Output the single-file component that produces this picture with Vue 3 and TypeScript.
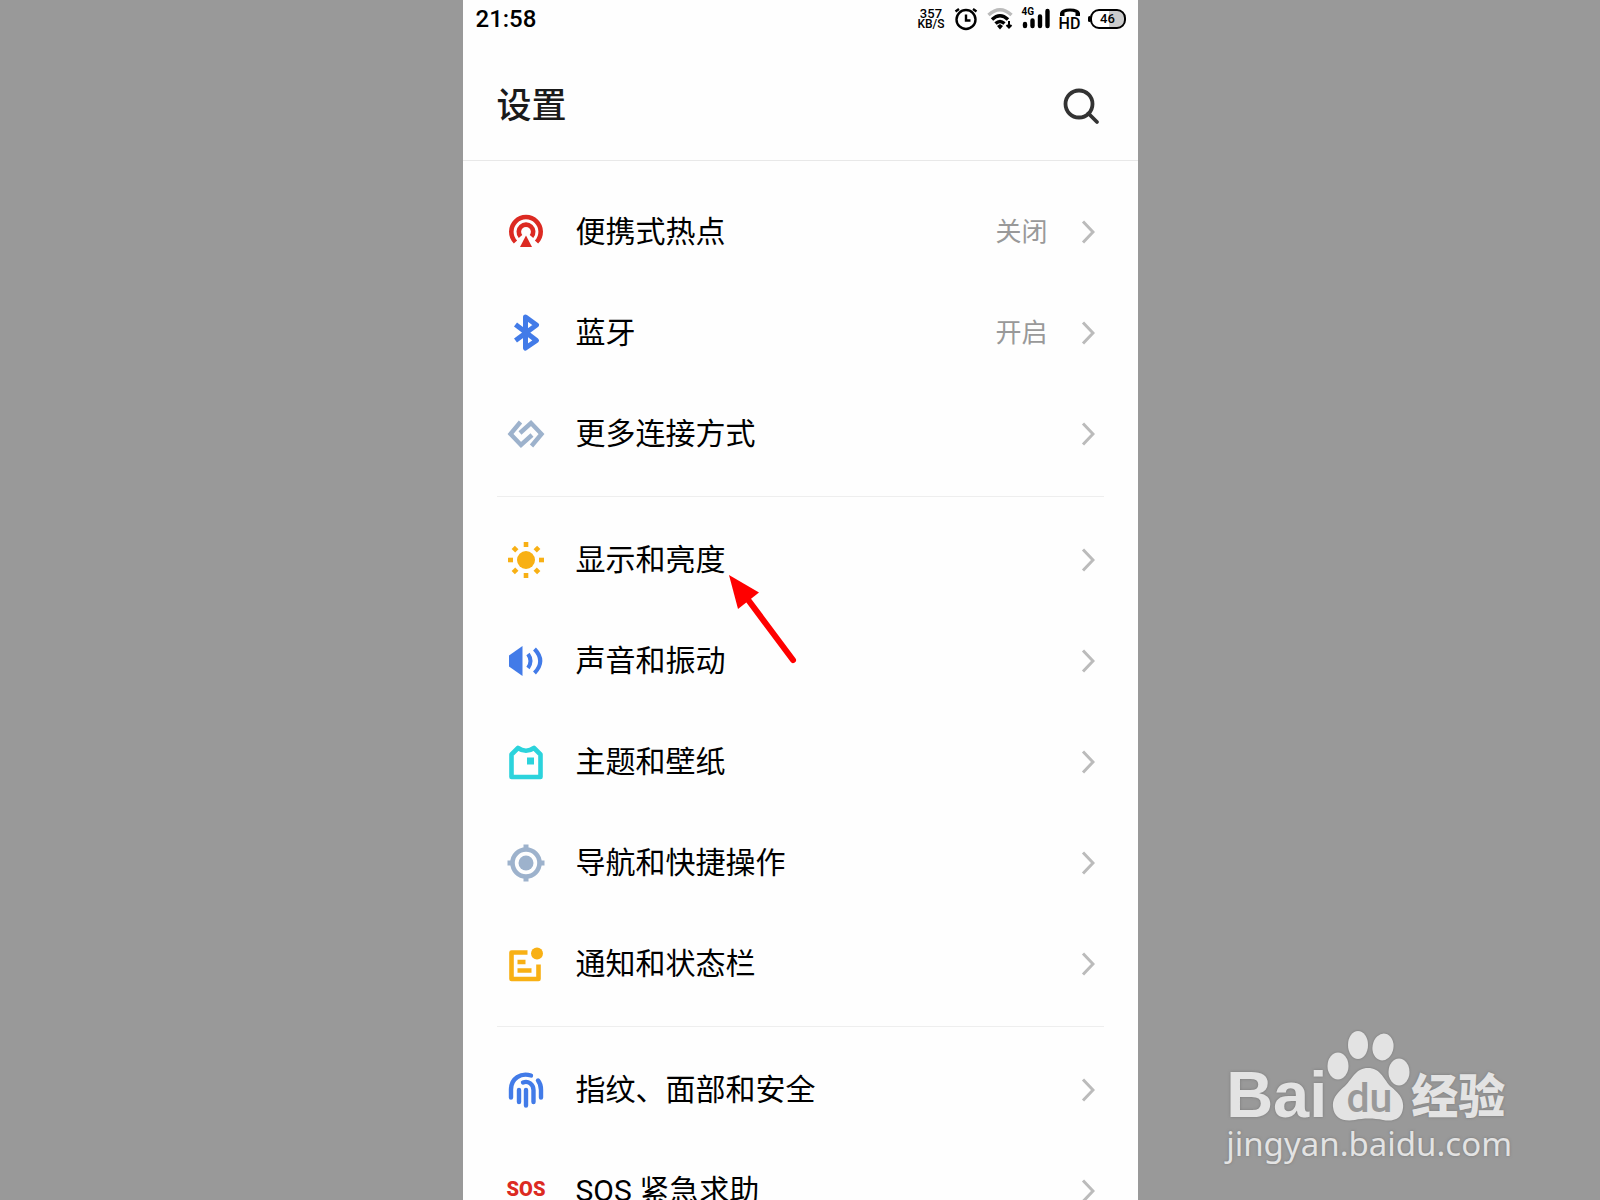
<script setup lang="ts">
type IconName =
  | 'hotspot' | 'bluetooth' | 'link' | 'sun' | 'sound'
  | 'theme' | 'target' | 'notice' | 'finger' | 'sos'

interface Item {
  icon: IconName
  label: string
  value?: string
  marked?: boolean
}

const groups: Item[][] = [
  [
    { icon: 'hotspot', label: '便携式热点', value: '关闭' },
    { icon: 'bluetooth', label: '蓝牙', value: '开启' },
    { icon: 'link', label: '更多连接方式' },
  ],
  [
    { icon: 'sun', label: '显示和亮度', marked: true },
    { icon: 'sound', label: '声音和振动' },
    { icon: 'theme', label: '主题和壁纸' },
    { icon: 'target', label: '导航和快捷操作' },
    { icon: 'notice', label: '通知和状态栏' },
  ],
  [
    { icon: 'finger', label: '指纹、面部和安全' },
    { icon: 'sos', label: 'SOS 紧急求助' },
  ],
]

const rays = [0, 45, 90, 135, 180, 225, 270, 315]
</script>

<template>
  <div class="page">
    <main class="phone">
      <div class="status">
        <time class="clock">21:58</time>
        <div class="indicators">
          <span class="speed"><span>357</span><span>KB/S</span></span>
          <svg width="24" height="24" viewBox="0 0 24 24" fill="none" stroke="#000" stroke-width="2.4">
            <circle cx="12" cy="12.5" r="9.5" />
            <path d="M12 7.5V13.5H16.5M1.5 4.5 5 2M22.5 4.5 19 2" />
          </svg>
          <svg width="26" height="24" viewBox="0 0 26 24" fill="none" stroke="#000" stroke-width="3.4">
            <path d="M1.5 8Q13 -2.5 24.5 8" stroke="#bbb" />
            <path d="M5 12.5Q13 5 21 12.5" />
            <path d="M8.5 16.5Q13 12.5 17.5 16.5" />
            <path d="M10 19 13 17 16 19 13 22.5Z" fill="#000" stroke="none" />
            <path d="M22 14V20M19.5 18 22 20.5 24.5 18" stroke-width="2" />
          </svg>
          <span class="signal">
            <small>4G</small>
            <svg width="28" height="22" viewBox="0 0 28 22" stroke="#000" stroke-width="4.4" stroke-linecap="round">
              <path d="M3 16V18M10.5 12.5V18M18 8.5V18M25.5 3V18" />
            </svg>
          </span>
          <span class="hd">
            <svg width="22" height="9" viewBox="0 0 22 9">
              <path d="M1 8V5Q2 .5 11 .5T21 5V8H16.5V4.5Q11 2.5 5.500 4.5V8Z" />
            </svg>
            <b>HD</b>
          </span>
          <span class="battery">46</span>
        </div>
      </div>

      <header class="head">
        <h1>设置</h1>
        <button class="search" type="button" aria-label="搜索">
          <svg width="40" height="40" viewBox="0 0 40 40" fill="none" stroke="#333" stroke-width="3.8">
            <circle cx="18" cy="17" r="13.5" />
            <path d="M27.5 26.5 36 35" stroke-linecap="round" />
          </svg>
        </button>
      </header>

      <nav class="list">
        <ul v-for="(group, g) in groups" :key="g" class="group">
          <li v-for="item in group" :key="item.icon">
            <a class="row" href="#">
              <svg class="icon" :class="item.icon" viewBox="0 0 40 40" fill="none" stroke="currentColor" stroke-width="4.6">
                <g v-if="item.icon === 'hotspot'">
                  <path d="M9.5 30A14.7 14.7 0 1 1 30.5 30" />
                  <path d="M14.5 24.5A7.2 7.2 0 1 1 25.5 24.5" />
                  <path d="M20 23.5 26 35H14Z" fill="currentColor" stroke="none" />
                </g>
                <path
                  v-else-if="item.icon === 'bluetooth'"
                  d="M9.5 11.5 30.5 27.5 19.5 35V4L30.5 12 9.5 27.5"
                  stroke-width="5"
                  stroke-linejoin="round"
                />
                <path
                  v-else-if="item.icon === 'link'"
                  d="M14.5 8 4.5 20 15 31 26 21M25.5 32 35.5 20 25 9 14 19"
                  stroke-width="4.4"
                />
                <g v-else-if="item.icon === 'sun'">
                  <circle cx="20" cy="20" r="9" fill="currentColor" stroke="none" />
                  <path v-for="r in rays" :key="r" d="M20 2V7" :transform="`rotate(${r} 20 20)`" />
                </g>
                <g v-else-if="item.icon === 'sound'">
                  <path d="M3 14.5 16.5 5V35L3 25.5Z" fill="currentColor" stroke="none" />
                  <path d="M22 13Q27 20 22 27M28.5 8Q40 20 28.5 32" stroke-width="4" />
                </g>
                <g v-else-if="item.icon === 'theme'">
                  <path d="M5.5 12.5 12 6Q20 11.5 28 6L34.5 12.5V35H5.5Z" stroke-linejoin="round" />
                  <path d="M21 15.5H28V22.5H21Z" fill="currentColor" stroke="none" />
                </g>
                <g v-else-if="item.icon === 'target'">
                  <circle cx="20" cy="20" r="13.5" />
                  <circle cx="20" cy="20" r="7.5" fill="currentColor" stroke="none" />
                  <path d="M20 1.5V6M20 34V38.5M1.5 20H6M34 20H38.5" stroke-width="5" />
                </g>
                <g v-else-if="item.icon === 'notice'">
                  <path d="M21.5 8.5H5.5V35H32.5V20.500" stroke-linejoin="round" />
                  <path d="M11.5 18H19.5M11.5 26.5H25.5" />
                  <circle cx="31" cy="9.5" r="6" fill="currentColor" stroke="none" />
                </g>
                <path
                  v-else-if="item.icon === 'finger'"
                  d="M5 27.5V19.5C5 8 15 2.5 25 5.5M32 10.5Q35 14 35 20V27.5M13 32V20M17 12.5C22 10.5 27.5 14 27.5 20V32M20 20V35.5"
                  stroke-width="4.4"
                  stroke-linecap="round"
                />
                <text v-else x="20" y="25" text-anchor="middle">SOS</text>
              </svg>
              <span class="label">{{ item.label }}</span>
              <span v-if="item.value" class="value">{{ item.value }}</span>
              <svg class="chevron" viewBox="0 0 14 24" fill="none" stroke="#bbb" stroke-width="3">
                <path d="M2 1.5 12 12 2 22.5" />
              </svg>
              <svg v-if="item.marked" class="pointer" viewBox="0 0 70 92" fill="#f00">
                <path d="M1 1 31 18.5 10 35Z" />
                <path d="M18 23 65 86" stroke="#f00" stroke-width="6" stroke-linecap="round" />
              </svg>
            </a>
          </li>
        </ul>
      </nav>
    </main>

    <aside class="watermark">
      <div class="brand">
        <span class="bai">Bai</span>
        <span class="paw">
          <svg viewBox="0 0 84 92">
            <ellipse cx="11" cy="36" rx="10.5" ry="13.5" />
            <ellipse cx="31" cy="15" rx="10" ry="14" />
            <ellipse cx="56" cy="17" rx="10.5" ry="13.5" transform="rotate(10 56 17)" />
            <ellipse cx="72" cy="42" rx="10.5" ry="13.5" />
            <path d="M41 38C53 38 56 48 63 56C72 63 77 69 76 78C75 89 66 92 56 90C47 88 36 88 28 90C16 92 7 88 6 77C5 68 11 62 18 56C26 48 29 38 41 38Z" />
          </svg>
          <span class="du">du</span>
        </span>
        <span class="jingyan">经验</span>
      </div>
      <div class="site">jingyan.baidu.com</div>
    </aside>
  </div>
</template>

<style>
body {
  background: #999;
}
</style>

<style scoped>
.page {
  position: relative;
  display: flex;
  justify-content: center;
  height: 100vh;
  overflow: hidden;
  background: #999;
  font-family: Roboto, "Noto Sans CJK SC", sans-serif;
}
.phone {
  display: flex;
  flex-direction: column;
  width: 100%;
  max-width: 675px;
  background: #fefefe;
  color: #000;
}
.status {
  display: flex;
  flex: none;
  justify-content: space-between;
  align-items: center;
  height: 38px;
  padding: 0 12px 0 13px;
}
.clock {
  font-size: 24px;
  font-weight: 500;
}
.indicators {
  display: flex;
  align-items: center;
  gap: 9px;
}
.speed {
  display: flex;
  flex-direction: column;
  align-items: center;
  font-size: 12px;
  line-height: 11px;
  font-weight: 500;
}
.speed span:first-child {
  font-size: 13px;
}
.signal,
.hd {
  position: relative;
  display: flex;
  flex-direction: column;
  align-items: center;
}
.signal small {
  position: absolute;
  left: 0;
  top: -2px;
  font-size: 10px;
  line-height: 12px;
  font-weight: 700;
}
.hd b {
  font-size: 16px;
  line-height: 13px;
  font-weight: 500;
}
.battery {
  position: relative;
  width: 36px;
  box-sizing: border-box;
  border: 2px solid #000;
  border-radius: 9px;
  background: linear-gradient(90deg, #fff 52%, #ccc 52%);
  font-size: 13px;
  line-height: 16px;
  font-weight: 500;
  text-align: center;
}
.battery::before {
  content: "";
  position: absolute;
  left: -4px;
  top: 5px;
  width: 3px;
  height: 6px;
  border-radius: 2px;
  background: #000;
}
.head {
  display: flex;
  flex: none;
  justify-content: space-between;
  align-items: center;
  height: 123px;
  box-sizing: border-box;
  padding: 26px 37px 10px 34px;
  border-bottom: 1px solid #e8e8e8;
}
h1 {
  margin: 0;
  font-size: 35px;
  line-height: 50px;
  font-weight: 500;
  color: #1a1a1a;
}
.search {
  display: flex;
  padding: 0;
  border: 0;
  background: none;
}
.list {
  flex: 1;
  min-height: 0;
  padding-top: 8px;
  overflow: hidden;
}
.group {
  margin: 0 34px;
  padding: 12px 0;
  list-style: none;
}
.group + .group {
  border-top: 1px solid #eee;
}
.row {
  position: relative;
  display: flex;
  align-items: center;
  height: 101px;
  padding: 0 9px;
  color: inherit;
  text-decoration: none;
}
.icon {
  width: 40px;
  height: 40px;
  margin-right: 30px;
  overflow: visible;
}
.label {
  flex: 1;
  font-size: 30px;
  line-height: 44px;
}
.value {
  margin-right: 33px;
  font-size: 26px;
  line-height: 38px;
  color: #999;
}
.chevron {
  width: 14px;
  height: 24px;
}
.pointer {
  position: absolute;
  left: 231px;
  top: 65px;
  width: 70px;
  height: 92px;
  z-index: 1;
}
.hotspot,
.sos {
  color: #dc2a22;
}
.bluetooth,
.sound,
.finger {
  color: #427be8;
}
.link,
.target {
  color: #9db2cc;
}
.sun,
.notice {
  color: #f8b014;
}
.theme {
  color: #2bd3dc;
}
.sos text {
  fill: currentColor;
  stroke: none;
  font: 900 20px Roboto, sans-serif;
}
.watermark {
  position: absolute;
  right: 88px;
  bottom: 34px;
  color: #e3e3e3;
  text-shadow: 0 0 3px #777;
}
.brand {
  display: flex;
  align-items: flex-end;
}
.bai {
  font: 700 65px/54px "Liberation Sans", sans-serif;
}
.paw {
  position: relative;
  width: 84px;
  height: 92px;
}
.paw svg {
  display: block;
  fill: #e3e3e3;
  filter: drop-shadow(0 0 1px #777);
}
.du {
  position: absolute;
  left: 0;
  right: 0;
  bottom: 4px;
  font: 500 41px/40px Roboto, sans-serif;
  color: #999;
  text-align: center;
  text-shadow: none;
}
.jingyan {
  font: 900 47px/58px "Noto Sans CJK SC", sans-serif;
}
.site {
  font: 400 33px/44px "Noto Sans", sans-serif;
}
</style>
